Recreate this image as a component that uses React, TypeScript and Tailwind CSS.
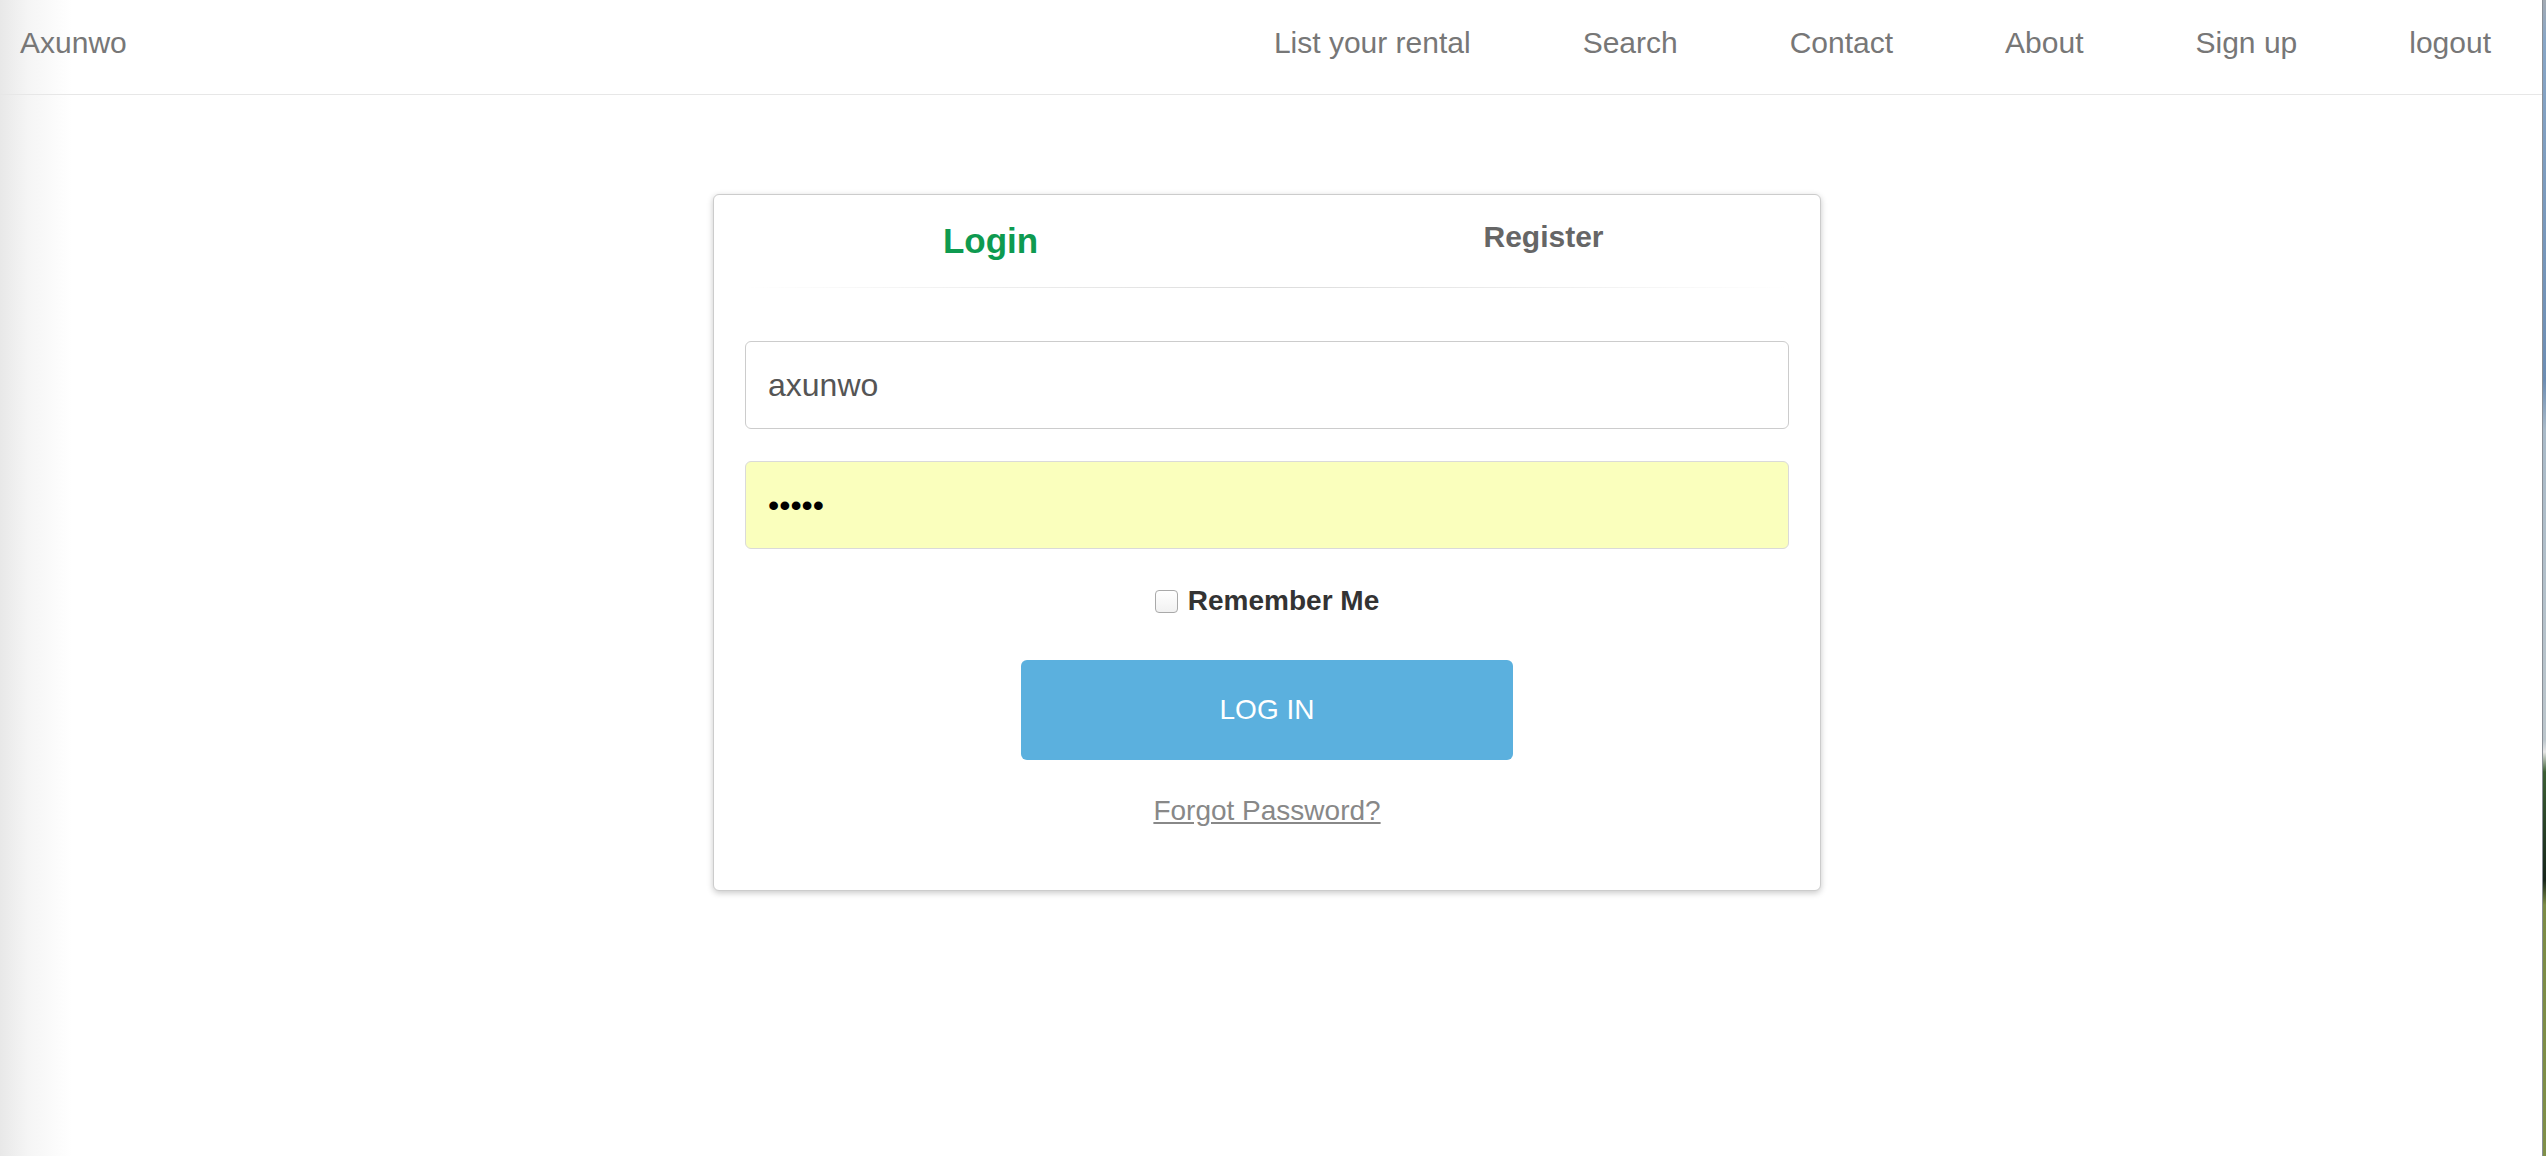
import React from 'react';

const links = ['List your rental', 'Search', 'Contact', 'About', 'Sign up', 'logout'];

export default function App() {
  return (
    <div className="flex min-h-[1156px] w-full bg-[linear-gradient(to_right,#e8e8e8_0px,#f5f5f5_28px,#ffffff_72px)] font-['Liberation_Sans',Arial,sans-serif]">
      <div className="flex flex-1 flex-col">
        {/* Navbar */}
        <nav className="flex h-[95px] items-start justify-between border-b border-[#e7e7e7] pl-[20px] pr-[51px] pt-[28px] text-[30px] leading-[30px] text-[#777]">
          <a href="#" className="text-[#777]">Axunwo</a>
          <ul className="flex gap-[112px]">
            {links.map((l) => (
              <li key={l}>
                <a href="#" className="text-[#777]">{l}</a>
              </li>
            ))}
          </ul>
        </nav>

        {/* Login card */}
        <div className="flex justify-center pr-[8px] pt-[99px]">
          <div className="w-[1108px] rounded-[6px] border border-[#cccccc] bg-white pb-[63px] shadow-[0_2px_6px_rgba(0,0,0,0.22)]">
            <div className="grid grid-cols-2 text-center font-bold">
              <div className="pt-[26px] text-[35px] leading-[40px] text-[#0e9a50]">Login</div>
              <div className="pt-[22px] text-[30px] leading-[40px] text-[#666]">Register</div>
            </div>
            <div className="mx-[30px] mt-[26px] h-px bg-[linear-gradient(to_right,rgba(0,0,0,0),#dcdcdc,rgba(0,0,0,0))]" />

            <form className="flex flex-col items-center px-[31px] pt-[53px]">
              <input
                type="text"
                readOnly
                defaultValue="axunwo"
                className="h-[88px] w-full rounded-[6px] border border-[#cccccc] bg-white pl-[22px] text-[32px] text-[#555] outline-none"
              />
              <input
                type="password"
                readOnly
                defaultValue="12345"
                className="mt-[32px] h-[88px] w-full rounded-[6px] border border-[#dadada] bg-[#faffbd] pl-[22px] text-[32px] text-black outline-none"
              />

              <label className="mt-[36px] flex items-center gap-[10px]">
                <span className="h-[23px] w-[23px] rounded-[4px] border border-[#a9a9a9] bg-[linear-gradient(#ffffff,#f1f1f1)]" />
                <span className="text-[28px] font-bold leading-[32px] text-[#333]">Remember Me</span>
              </label>

              <button
                type="button"
                className="mt-[43px] h-[100px] w-[492px] rounded-[6px] bg-[#5bb0de] text-[28px] text-white"
              >
                LOG IN
              </button>

              <a href="#" className="mt-[35px] text-[28px] leading-[32px] text-[#888] underline">
                Forgot Password?
              </a>
            </form>
          </div>
        </div>
      </div>

      {/* edge of a background photo peeking in on the right */}
      <div className="w-[4px] shrink-0 border-l border-[#8a8f96] bg-[linear-gradient(to_bottom,#a3aab2_0px,#88a6c6_40px,#6c8db3_380px,#a9bac8_430px,#bcc6cc_740px,#e6e6e6_752px,#3b5e34_772px,#16251a_880px,#7b8b45_905px,#7f8f48_100%)]" />
    </div>
  );
}
